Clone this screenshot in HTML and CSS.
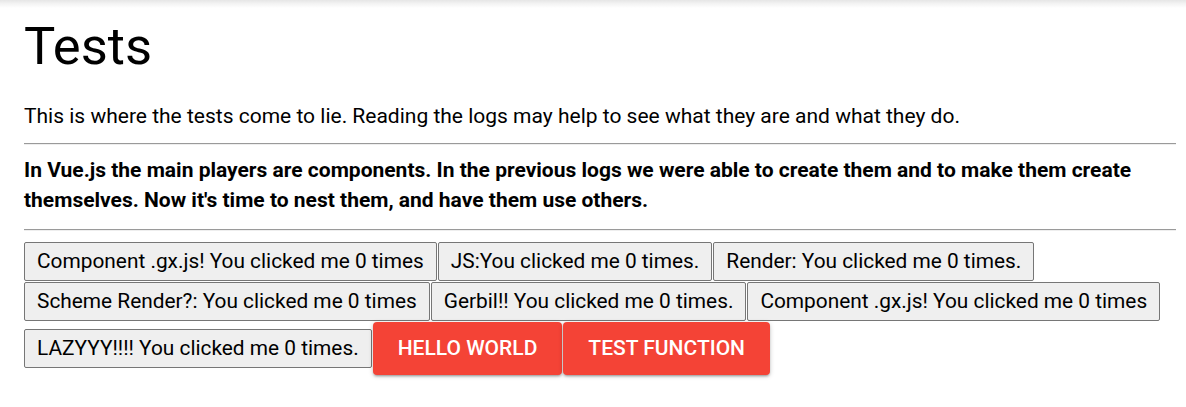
FILE: index.html
```html
<!DOCTYPE html>
<html>
<head>
<meta charset="utf-8">
<link rel="stylesheet" href="styles.css">
</head>
<body>
<div class="topshade"></div>
<main class="page">
  <h1 class="title">Tests</h1>
  <p class="intro">This is where the tests come to lie. Reading the logs may help to see what they are and what they do.</p>
  <hr class="rule">
  <p class="lead">In Vue.js the main players are components. In the previous logs we were able to create them and to make them create themselves. Now it's time to nest them, and have them use others.</p>
  <hr class="rule rule-2">
  <div class="buttons">
    <button class="plain">Component .gx.js! You clicked me 0 times</button>
    <button class="plain">JS:You clicked me 0 times.</button>
    <button class="plain">Render: You clicked me 0 times.</button>
    <button class="plain">Scheme Render?: You clicked me 0 times</button>
    <button class="plain">Gerbil!! You clicked me 0 times.</button>
    <button class="plain">Component .gx.js! You clicked me 0 times</button>
    <button class="plain">LAZYYY!!!! You clicked me 0 times.</button>
    <button class="raised">Hello World</button>
    <button class="raised">Test Function</button>
  </div>
</main>
</body>
</html>
```
FILE: styles.css
```css
html, body {
  margin: 0;
  padding: 0;
  background: #ffffff;
}
body {
  font-family: Roboto, "Liberation Sans", sans-serif;
  color: #000;
  width: 1186px;
  height: 407px;
  overflow: hidden;
}
.topshade {
  height: 8px;
  background: linear-gradient(to bottom, #e6e6e6 0%, #f3f3f3 45%, #ffffff 100%);
}
.page {
  padding: 0 10px 0 24px;
}
.title {
  margin: 10px 0 0;
  font-size: 52.5px;
  line-height: 56px;
  font-weight: 400;
}
.intro {
  margin: 27px 0 0;
  font-size: 21px;
  line-height: 30px;
}
.rule {
  margin: 12px 0 0;
  border: 0;
  border-top: 1px solid #9a9a9a;
  border-bottom: 1px solid #eeeeee;
  height: 0;
}
.lead {
  margin: 10px 0 0;
  font-size: 21px;
  line-height: 30px;
  font-weight: 700;
}
.rule-2 {
  margin-top: 14px;
}
.buttons {
  margin-top: 11px;
  display: flex;
  flex-wrap: wrap;
  align-items: baseline;
  row-gap: 1px;
  column-gap: 1px;
}
.plain {
  font-family: Roboto, "Liberation Sans", sans-serif;
  font-size: 20.85px;
  line-height: 25px;
  padding: 6px 12px;
  margin: 0;
  border: 1px solid #767676;
  border-radius: 2px;
  background: #efefef;
  color: #000;
}
.raised {
  font-family: Roboto, "Liberation Sans", sans-serif;
  font-size: 21px;
  font-weight: 500;
  text-transform: uppercase;
  height: 53px;
  line-height: 53px;
  padding: 0 25px;
  margin: 0;
  border: 0;
  border-radius: 4px;
  background: #f44336;
  color: #fff;
  box-shadow: 0 2px 2px 0 rgba(0,0,0,.14), 0 3px 1px -2px rgba(0,0,0,.12), 0 1px 5px 0 rgba(0,0,0,.2);
}
```
